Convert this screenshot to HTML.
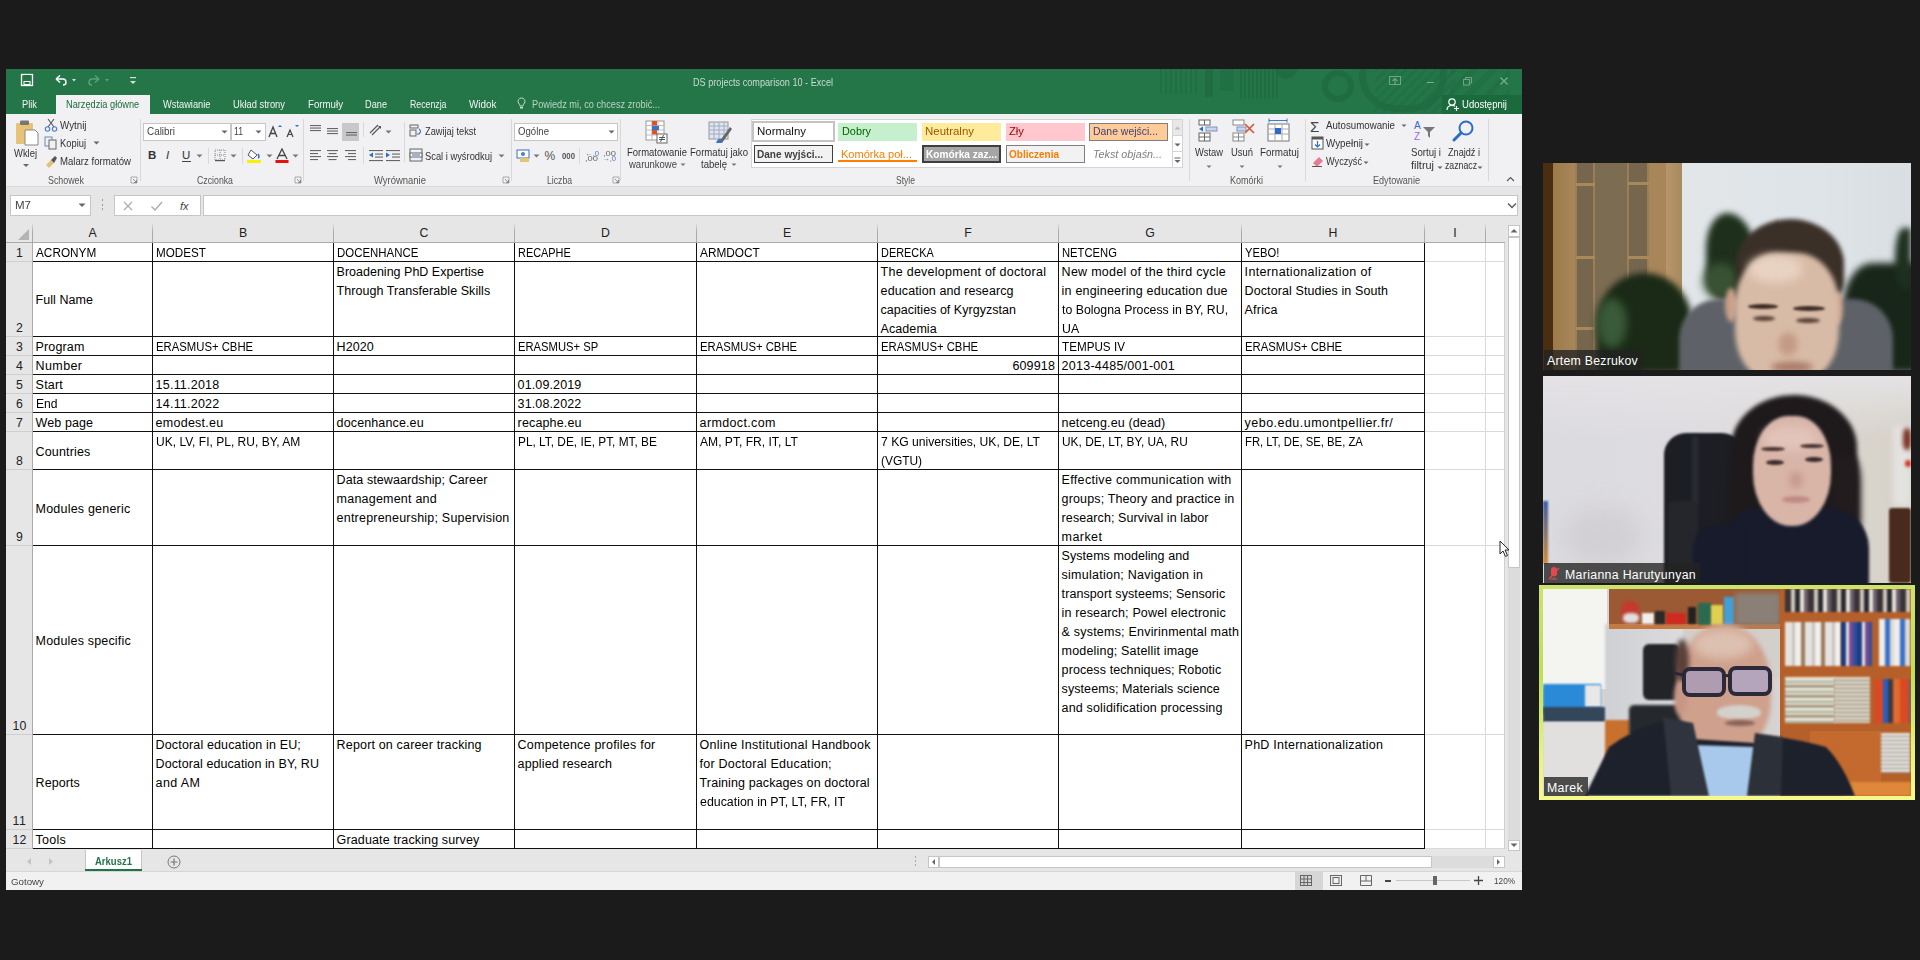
<!DOCTYPE html><html><head><meta charset="utf-8"><style>
html,body{margin:0;padding:0}
body{width:1920px;height:960px;background:#1b1b1b;position:relative;overflow:hidden;font-family:"Liberation Sans",sans-serif}
.r{position:absolute}
.t{position:absolute;white-space:nowrap;line-height:1;font-family:"Liberation Sans",sans-serif}
</style></head><body>
<div class="r" style="left:6px;top:69px;width:1516px;height:821px;background:#f1f1f1;"></div>
<div class="r" style="left:6px;top:69px;width:1516px;height:45px;background:#247649;"></div>
<div class="r" style="left:1150px;top:69px;width:372px;height:44px;overflow:hidden"><div class="r" style="left:10px;top:0;width:40px;height:25px;background:repeating-linear-gradient(90deg,#1f6c41 0 2px,transparent 2px 5px);opacity:.8"></div><div class="r" style="left:55px;top:0;width:8px;height:28px;background:#1f6b41;opacity:.8"></div><div class="r" style="left:70px;top:0;width:14px;height:22px;background:#1f6b41;opacity:.6"></div><div class="r" style="left:90px;top:0;width:38px;height:30px;background:repeating-linear-gradient(90deg,#1e6a40 0 2px,transparent 2px 4px);opacity:.8"></div><div class="r" style="left:125px;top:-10px;width:22px;height:20px;border-radius:50%;background:#1f6a40;opacity:.8"></div><div class="r" style="left:172px;top:1px;width:32px;height:32px;border-radius:50%;border:6px solid #1f6a41;box-sizing:border-box;opacity:.8"></div><div class="r" style="left:209px;top:-30px;width:88px;height:73px;border-radius:38px;border:7px solid #1f6a41;box-sizing:border-box;opacity:.7"></div><div class="r" style="left:225px;top:0;width:80px;height:44px;background:repeating-linear-gradient(135deg,#1f6a41 0 3px,transparent 3px 7px);opacity:.5"></div><div class="r" style="left:300px;top:0;width:60px;height:44px;background:repeating-linear-gradient(135deg,#1f6a41 0 6px,transparent 6px 14px);opacity:.5"></div></div>
<div class="r" style="left:1442px;top:95px;width:80px;height:19px;background:#1b6a3d;"></div>
<svg class="r" style="left:20px;top:73px;" width="14" height="14" viewBox="0 0 14 14"><rect x="1.5" y="1.5" width="11" height="11" fill="none" stroke="#fff" stroke-width="1.3"/><rect x="4" y="2" width="6" height="4" fill="#217346"/><rect x="4" y="8.5" width="6" height="3" fill="none" stroke="#fff" stroke-width="1"/></svg>
<svg class="r" style="left:53px;top:73px;" width="26" height="14" viewBox="0 0 26 14"><path d="M3 6 L7 2.5 M3 6 L7 9.5 M3 6 H10 Q13 6 13 9.5 Q13 12 10 12" fill="none" stroke="#fff" stroke-width="1.4"/><path d="M19 6 L23 6 L21 8.5Z" fill="#cfe3d5"/></svg>
<svg class="r" style="left:86px;top:73px;" width="26" height="14" viewBox="0 0 26 14"><path d="M13 6 L9 2.5 M13 6 L9 9.5 M13 6 H6 Q3 6 3 9.5 Q3 12 6 12" fill="none" stroke="#5f9f78" stroke-width="1.4"/><path d="M19 6 L23 6 L21 8.5Z" fill="#5f9f78"/></svg>
<svg class="r" style="left:128px;top:73px;" width="10" height="14" viewBox="0 0 10 14"><rect x="2" y="4" width="6" height="1.2" fill="#cfe3d5"/><path d="M2 8 L8 8 L5 11Z" fill="#cfe3d5"/></svg>
<div class="t" style="left:693.00px;top:76.61px;font-size:10.5px;color:#c8dccf;transform:scaleX(0.8692);transform-origin:0 0">DS projects comparison 10 - Excel</div>
<svg class="r" style="left:1388px;top:75px;" width="14" height="11" viewBox="0 0 14 11"><rect x="1.5" y="1.5" width="11" height="8" fill="none" stroke="#6fa584" stroke-width="1"/><path d="M7 9 V4 M4.5 6 L7 3.5 L9.5 6" fill="none" stroke="#6fa584" stroke-width="1.2"/></svg>
<div class="r" style="left:1427px;top:82px;width:7px;height:1px;background:#7ab08e;"></div>
<svg class="r" style="left:1462px;top:76px;" width="11" height="10" viewBox="0 0 11 10"><rect x="1.5" y="3.5" width="6" height="5.5" fill="none" stroke="#6fa584"/><path d="M3.5 3.5 V1.5 H9.5 V7 H7.5" fill="none" stroke="#6fa584"/></svg>
<svg class="r" style="left:1499px;top:76px;" width="10" height="10" viewBox="0 0 10 10"><path d="M1.5 1.5 L8.5 8.5 M8.5 1.5 L1.5 8.5" stroke="#7ab08e" stroke-width="1.3"/></svg>
<div class="r" style="left:56px;top:95px;width:94px;height:19px;background:#f1f0f2;"></div>
<div class="t" style="left:21.70px;top:99.16px;font-size:10.8px;color:#f0f5f1;transform:scaleX(0.8619);transform-origin:0 0">Plik</div>
<div class="t" style="left:66.40px;top:99.16px;font-size:10.8px;color:#1d6b3e;transform:scaleX(0.8527);transform-origin:0 0">Narzędzia główne</div>
<div class="t" style="left:162.50px;top:99.16px;font-size:10.8px;color:#f0f5f1;transform:scaleX(0.8602);transform-origin:0 0">Wstawianie</div>
<div class="t" style="left:232.60px;top:99.16px;font-size:10.8px;color:#f0f5f1;transform:scaleX(0.8663);transform-origin:0 0">Układ strony</div>
<div class="t" style="left:307.50px;top:99.16px;font-size:10.8px;color:#f0f5f1;transform:scaleX(0.8973);transform-origin:0 0">Formuły</div>
<div class="t" style="left:365.00px;top:99.16px;font-size:10.8px;color:#f0f5f1;transform:scaleX(0.8521);transform-origin:0 0">Dane</div>
<div class="t" style="left:409.50px;top:99.16px;font-size:10.8px;color:#f0f5f1;transform:scaleX(0.8106);transform-origin:0 0">Recenzja</div>
<div class="t" style="left:468.50px;top:99.16px;font-size:10.8px;color:#f0f5f1;transform:scaleX(0.9165);transform-origin:0 0">Widok</div>
<svg class="r" style="left:517px;top:97px;" width="9" height="13" viewBox="0 0 9 13"><path d="M4.5 1 A3.3 3.3 0 0 1 7.5 6 Q6 7.5 6 9 H3 Q3 7.5 1.5 6 A3.3 3.3 0 0 1 4.5 1Z" fill="none" stroke="#c5dccc" stroke-width="1"/><rect x="3" y="10" width="3" height="1.5" fill="#c5dccc"/></svg>
<div class="t" style="left:532.00px;top:99.16px;font-size:10.8px;color:#b8d3c1;transform:scaleX(0.8530);transform-origin:0 0">Powiedz mi, co chcesz zrobić...</div>
<svg class="r" style="left:1446px;top:97px;" width="14" height="14" viewBox="0 0 14 14"><circle cx="6" cy="5" r="3.2" fill="none" stroke="#fff" stroke-width="1.2"/><path d="M1 13 Q1 8.5 6 8.5 Q8 8.5 9 9.3" fill="none" stroke="#fff" stroke-width="1.2"/><path d="M10.5 9 V14 M8 11.5 H13" stroke="#fff" stroke-width="1.2"/></svg>
<div class="t" style="left:1462.00px;top:99.16px;font-size:10.8px;color:#ffffff;transform:scaleX(0.8818);transform-origin:0 0">Udostępnij</div>
<div class="r" style="left:6px;top:114px;width:1516px;height:73px;background:#f1f0f2;"></div>
<div class="r" style="left:6px;top:186px;width:1516px;height:1px;background:#dadada;"></div>
<div class="r" style="left:140px;top:119px;width:1px;height:62px;background:#d8d8d8;"></div>
<div class="r" style="left:303px;top:119px;width:1px;height:62px;background:#d8d8d8;"></div>
<div class="r" style="left:511px;top:119px;width:1px;height:62px;background:#d8d8d8;"></div>
<div class="r" style="left:620px;top:119px;width:1px;height:62px;background:#d8d8d8;"></div>
<div class="r" style="left:1189px;top:119px;width:1px;height:62px;background:#d8d8d8;"></div>
<div class="r" style="left:1305px;top:119px;width:1px;height:62px;background:#d8d8d8;"></div>
<div class="r" style="left:1488px;top:119px;width:1px;height:62px;background:#d8d8d8;"></div>
<div class="t" style="left:48.00px;top:175.78px;font-size:10.3px;color:#555;transform:scaleX(0.8614);transform-origin:0 0">Schowek</div>
<div class="t" style="left:197.00px;top:175.78px;font-size:10.3px;color:#555;transform:scaleX(0.8498);transform-origin:0 0">Czcionka</div>
<div class="t" style="left:374.00px;top:175.78px;font-size:10.3px;color:#555;transform:scaleX(0.9190);transform-origin:0 0">Wyrównanie</div>
<div class="t" style="left:547.00px;top:175.78px;font-size:10.3px;color:#555;transform:scaleX(0.8397);transform-origin:0 0">Liczba</div>
<div class="t" style="left:895.50px;top:175.78px;font-size:10.3px;color:#555;transform:scaleX(0.8297);transform-origin:0 0">Style</div>
<div class="t" style="left:1230.00px;top:175.78px;font-size:10.3px;color:#555;transform:scaleX(0.8736);transform-origin:0 0">Komórki</div>
<div class="t" style="left:1373.00px;top:175.78px;font-size:10.3px;color:#555;transform:scaleX(0.8826);transform-origin:0 0">Edytowanie</div>
<svg class="r" style="left:130px;top:176px;" width="8" height="8" viewBox="0 0 8 8"><path d="M1 1 H7 V7 H1Z" fill="none" stroke="#999" stroke-width=".8"/><path d="M3 3 L6.5 6.5 M6.5 4 V6.5 H4" fill="none" stroke="#777" stroke-width=".8"/></svg>
<svg class="r" style="left:294px;top:176px;" width="8" height="8" viewBox="0 0 8 8"><path d="M1 1 H7 V7 H1Z" fill="none" stroke="#999" stroke-width=".8"/><path d="M3 3 L6.5 6.5 M6.5 4 V6.5 H4" fill="none" stroke="#777" stroke-width=".8"/></svg>
<svg class="r" style="left:502px;top:176px;" width="8" height="8" viewBox="0 0 8 8"><path d="M1 1 H7 V7 H1Z" fill="none" stroke="#999" stroke-width=".8"/><path d="M3 3 L6.5 6.5 M6.5 4 V6.5 H4" fill="none" stroke="#777" stroke-width=".8"/></svg>
<svg class="r" style="left:612px;top:176px;" width="8" height="8" viewBox="0 0 8 8"><path d="M1 1 H7 V7 H1Z" fill="none" stroke="#999" stroke-width=".8"/><path d="M3 3 L6.5 6.5 M6.5 4 V6.5 H4" fill="none" stroke="#777" stroke-width=".8"/></svg>
<svg class="r" style="left:14px;top:119px;" width="26" height="30" viewBox="0 0 26 30"><rect x="2" y="4" width="17" height="21" rx="1" fill="#e8c377"/><rect x="6" y="1.5" width="9" height="4.5" rx="1" fill="#777"/><path d="M11 11 H21 L24 14 V26 H11Z" fill="#fff" stroke="#888" stroke-width="1"/></svg>
<div class="t" style="left:14.00px;top:147.86px;font-size:10.8px;color:#333;transform:scaleX(0.8712);transform-origin:0 0">Wklej</div>
<svg class="r" style="left:22px;top:163px;" width="8" height="5" viewBox="0 0 8 5"><path d="M1 1 H7 L4 4Z" fill="#666"/></svg>
<svg class="r" style="left:44px;top:118px;" width="14" height="14" viewBox="0 0 14 14"><path d="M4 1 L10 9 M10 1 L4 9" stroke="#555" stroke-width="1.1"/><circle cx="3.5" cy="11" r="2.2" fill="none" stroke="#4a7cc7" stroke-width="1.1"/><circle cx="10.5" cy="11" r="2.2" fill="none" stroke="#4a7cc7" stroke-width="1.1"/></svg>
<div class="t" style="left:60.00px;top:119.86px;font-size:10.8px;color:#333;transform:scaleX(0.9043);transform-origin:0 0">Wytnij</div>
<svg class="r" style="left:44px;top:136px;" width="14" height="14" viewBox="0 0 14 14"><rect x="1" y="1" width="7" height="9" fill="none" stroke="#6a8ab8" stroke-width="1"/><rect x="5" y="4" width="7" height="9" fill="#f1f1f1" stroke="#666" stroke-width="1"/></svg>
<div class="t" style="left:60.00px;top:137.86px;font-size:10.8px;color:#333;transform:scaleX(0.8660);transform-origin:0 0">Kopiuj</div>
<svg class="r" style="left:93px;top:141px;" width="7" height="5" viewBox="0 0 7 5"><path d="M.5 .5 H6.5 L3.5 3.5Z" fill="#666"/></svg>
<svg class="r" style="left:44px;top:155px;" width="14" height="13" viewBox="0 0 14 13"><path d="M2 10 L7 5 L10 8 L5 13Z" fill="#e3c275"/><path d="M7 5 L11 1 L13 3 L10 8Z" fill="#555"/></svg>
<div class="t" style="left:60.00px;top:155.86px;font-size:10.8px;color:#333;transform:scaleX(0.8895);transform-origin:0 0">Malarz formatów</div>
<div class="r" style="left:143px;top:123px;width:88px;height:18px;background:#fff;border:1px solid #c6c6c6;box-sizing:border-box;"></div>
<div class="t" style="left:146.50px;top:126.36px;font-size:10.8px;color:#444;transform:scaleX(0.9148);transform-origin:0 0">Calibri</div>
<svg class="r" style="left:221px;top:130px;" width="7" height="4" viewBox="0 0 7 4"><path d="M.5 .5 H6.5 L3.5 3.5Z" fill="#666"/></svg>
<div class="r" style="left:231px;top:123px;width:35px;height:18px;background:#fff;border:1px solid #c6c6c6;box-sizing:border-box;"></div>
<div class="t" style="left:234.00px;top:126.36px;font-size:10.8px;color:#444;transform:scaleX(0.8027);transform-origin:0 0">11</div>
<svg class="r" style="left:255px;top:130px;" width="7" height="4" viewBox="0 0 7 4"><path d="M.5 .5 H6.5 L3.5 3.5Z" fill="#666"/></svg>
<svg class="r" style="left:268px;top:124px;" width="14" height="14" viewBox="0 0 14 14"><path d="M1 13 L5 3 L9 13 M2.5 9.5 H7.5" fill="none" stroke="#444" stroke-width="1.3"/><path d="M10 3 L12 1 L14 3Z" fill="#2b6bc9"/></svg>
<svg class="r" style="left:285px;top:124px;" width="14" height="14" viewBox="0 0 14 14"><path d="M2 13 L5 6 L8 13 M3 10.5 H7" fill="none" stroke="#444" stroke-width="1.2"/><path d="M10 1 L14 1 L12 3Z" fill="#2b6bc9"/></svg>
<div class="t" style="left:148.00px;top:149.77px;font-size:11.5px;color:#333;font-weight:bold">B</div>
<div class="t" style="left:166.00px;top:149.77px;font-size:11.5px;color:#333;font-style:italic">I</div>
<div class="t" style="left:182.00px;top:149.77px;font-size:11.5px;color:#333">U</div>
<div class="r" style="left:182px;top:161px;width:9px;height:1px;background:#444;"></div>
<svg class="r" style="left:196px;top:154px;" width="7" height="4" viewBox="0 0 7 4"><path d="M.5 .5 H6.5 L3.5 3.5Z" fill="#777"/></svg>
<div class="r" style="left:208px;top:148px;width:1px;height:16px;background:#d8d8d8;"></div>
<svg class="r" style="left:214px;top:149px;" width="12" height="13" viewBox="0 0 12 13"><path d="M1 1 H11 V11 H1Z M6 1 V11 M1 6 H11" fill="none" stroke="#888" stroke-width="1" stroke-dasharray="1 1"/><rect x="1" y="11" width="10" height="1.2" fill="#555"/></svg>
<svg class="r" style="left:230px;top:154px;" width="7" height="4" viewBox="0 0 7 4"><path d="M.5 .5 H6.5 L3.5 3.5Z" fill="#777"/></svg>
<div class="r" style="left:242px;top:148px;width:1px;height:16px;background:#d8d8d8;"></div>
<svg class="r" style="left:246px;top:148px;" width="18" height="16" viewBox="0 0 18 16"><path d="M5 2 L11 7 L7 11 L2 7Z" fill="#fff" stroke="#555" stroke-width="1"/><path d="M12 6 Q14 9 12 10" fill="none" stroke="#2b6bc9" stroke-width="1.5"/><rect x="1" y="12" width="14" height="3" fill="#f7f200"/></svg>
<svg class="r" style="left:266px;top:154px;" width="7" height="4" viewBox="0 0 7 4"><path d="M.5 .5 H6.5 L3.5 3.5Z" fill="#777"/></svg>
<svg class="r" style="left:274px;top:148px;" width="16" height="16" viewBox="0 0 16 16"><path d="M3 11 L8 1 L13 11 M5 7.5 H11" fill="none" stroke="#444" stroke-width="1.3"/><rect x="1.5" y="12" width="13" height="3" fill="#e81010"/></svg>
<svg class="r" style="left:292px;top:154px;" width="7" height="4" viewBox="0 0 7 4"><path d="M.5 .5 H6.5 L3.5 3.5Z" fill="#777"/></svg>
<svg class="r" style="left:309px;top:124px;" width="14" height="14" viewBox="0 0 14 14"><rect x="1" y="1.0" width="11" height="1.1" fill="#666"/><rect x="1" y="3.5" width="11" height="1.1" fill="#666"/><rect x="1" y="6.0" width="11" height="1.1" fill="#666"/></svg>
<svg class="r" style="left:326px;top:127px;" width="14" height="14" viewBox="0 0 14 14"><rect x="1" y="1.0" width="11" height="1.1" fill="#666"/><rect x="1" y="3.5" width="11" height="1.1" fill="#666"/><rect x="1" y="6.0" width="11" height="1.1" fill="#666"/></svg>
<div class="r" style="left:342px;top:123px;width:17px;height:18px;background:#c8c8c8;"></div>
<svg class="r" style="left:345px;top:131px;" width="14" height="14" viewBox="0 0 14 14"><rect x="1" y="1.0" width="11" height="1.1" fill="#666"/><rect x="1" y="3.5" width="11" height="1.1" fill="#666"/></svg>
<svg class="r" style="left:309px;top:149px;" width="14" height="14" viewBox="0 0 14 14"><rect x="1" y="1.0" width="11" height="1.1" fill="#666"/><rect x="1" y="4.0" width="8" height="1.1" fill="#666"/><rect x="1" y="7.0" width="11" height="1.1" fill="#666"/><rect x="1" y="10.0" width="8" height="1.1" fill="#666"/></svg>
<svg class="r" style="left:326px;top:149px;" width="14" height="14" viewBox="0 0 14 14"><rect x="1" y="1.0" width="11" height="1.1" fill="#666"/><rect x="2.5" y="4.0" width="8" height="1.1" fill="#666"/><rect x="1" y="7.0" width="11" height="1.1" fill="#666"/><rect x="2.5" y="10.0" width="8" height="1.1" fill="#666"/></svg>
<svg class="r" style="left:344px;top:149px;" width="14" height="14" viewBox="0 0 14 14"><rect x="1" y="1.0" width="11" height="1.1" fill="#666"/><rect x="4" y="4.0" width="8" height="1.1" fill="#666"/><rect x="1" y="7.0" width="11" height="1.1" fill="#666"/><rect x="4" y="10.0" width="8" height="1.1" fill="#666"/></svg>
<div class="r" style="left:363px;top:122px;width:1px;height:15px;background:#d8d8d8;"></div>
<div class="r" style="left:363px;top:147px;width:1px;height:17px;background:#d8d8d8;"></div>
<svg class="r" style="left:368px;top:124px;" width="16" height="13" viewBox="0 0 16 13"><path d="M2 9 L10 1 M4 11 L12 3" stroke="#555" stroke-width="1.1"/><path d="M13 2 L10 2 L13 5Z" fill="#555"/></svg>
<svg class="r" style="left:385px;top:130px;" width="7" height="4" viewBox="0 0 7 4"><path d="M.5 .5 H6.5 L3.5 3.5Z" fill="#777"/></svg>
<svg class="r" style="left:368px;top:149px;" width="16" height="13" viewBox="0 0 16 13"><rect x="1" y="1" width="14" height="1.1" fill="#666"/><rect x="7" y="4.5" width="8" height="1.1" fill="#666"/><rect x="7" y="7.5" width="8" height="1.1" fill="#666"/><rect x="1" y="11" width="14" height="1.1" fill="#666"/><path d="M1 6 L5 3.5 V8.5Z" fill="#2b6bc9"/></svg>
<svg class="r" style="left:385px;top:149px;" width="16" height="13" viewBox="0 0 16 13"><rect x="1" y="1" width="14" height="1.1" fill="#666"/><rect x="7" y="4.5" width="8" height="1.1" fill="#666"/><rect x="7" y="7.5" width="8" height="1.1" fill="#666"/><rect x="1" y="11" width="14" height="1.1" fill="#666"/><path d="M5 6 L1 3.5 V8.5Z" fill="#2b6bc9"/></svg>
<div class="r" style="left:404px;top:122px;width:1px;height:40px;background:#d8d8d8;"></div>
<svg class="r" style="left:409px;top:124px;" width="14" height="14" viewBox="0 0 14 14"><rect x="1" y="1" width="8" height="3" fill="none" stroke="#666"/><rect x="1" y="6" width="6" height="6" fill="none" stroke="#666"/><path d="M10 5 Q13 7 10 10 L8 10" fill="none" stroke="#2b6bc9" stroke-width="1.1"/></svg>
<div class="t" style="left:425.00px;top:125.86px;font-size:10.8px;color:#333;transform:scaleX(0.8583);transform-origin:0 0">Zawijaj tekst</div>
<svg class="r" style="left:409px;top:148px;" width="14" height="14" viewBox="0 0 14 14"><rect x="1" y="1" width="12" height="12" fill="none" stroke="#666"/><rect x="1" y="5" width="12" height="4" fill="#fff" stroke="#666"/><path d="M3 7 H11" stroke="#2b6bc9"/></svg>
<div class="t" style="left:425.00px;top:150.86px;font-size:10.8px;color:#333;transform:scaleX(0.8653);transform-origin:0 0">Scal i wyśrodkuj</div>
<svg class="r" style="left:498px;top:154px;" width="7" height="4" viewBox="0 0 7 4"><path d="M.5 .5 H6.5 L3.5 3.5Z" fill="#777"/></svg>
<div class="r" style="left:514px;top:123px;width:104px;height:18px;background:#fff;border:1px solid #c6c6c6;box-sizing:border-box;"></div>
<div class="t" style="left:517.50px;top:126.36px;font-size:10.8px;color:#444;transform:scaleX(0.8901);transform-origin:0 0">Ogólne</div>
<svg class="r" style="left:608px;top:130px;" width="7" height="4" viewBox="0 0 7 4"><path d="M.5 .5 H6.5 L3.5 3.5Z" fill="#666"/></svg>
<svg class="r" style="left:516px;top:149px;" width="16" height="14" viewBox="0 0 16 14"><rect x="1" y="1" width="12" height="8" fill="#fff" stroke="#4a7cc7" stroke-width="1.1"/><circle cx="7" cy="5" r="2" fill="#4a7cc7"/><rect x="4" y="9" width="9" height="4" fill="#e8c377"/></svg>
<svg class="r" style="left:533px;top:154px;" width="7" height="4" viewBox="0 0 7 4"><path d="M.5 .5 H6.5 L3.5 3.5Z" fill="#777"/></svg>
<div class="t" style="left:544.50px;top:150.34px;font-size:12px;color:#555">%</div>
<div class="t" style="left:561.50px;top:151.80px;font-size:8.5px;color:#555;font-weight:bold;transform:scaleX(0.9166);transform-origin:0 0">000</div>
<div class="r" style="left:579px;top:148px;width:1px;height:16px;background:#d8d8d8;"></div>
<div class="t" style="left:585.00px;top:150.23px;font-size:8px;color:#4a7cc7;transform:scaleX(0.9542);transform-origin:0 0">←,0</div>
<div class="t" style="left:585.00px;top:155.23px;font-size:8px;color:#666;transform:scaleX(1.1689);transform-origin:0 0">,00</div>
<div class="t" style="left:603.00px;top:150.23px;font-size:8px;color:#666;transform:scaleX(1.1689);transform-origin:0 0">,00</div>
<div class="t" style="left:602.00px;top:155.23px;font-size:8px;color:#4a7cc7;transform:scaleX(0.9542);transform-origin:0 0">→,0</div>
<svg class="r" style="left:645px;top:120px;" width="24" height="24" viewBox="0 0 24 24"><rect x="1" y="1" width="18" height="19" fill="#fff" stroke="#999"/><path d="M1 5.5 H19 M1 10 H19 M1 15 H19 M7 1 V20 M13 1 V20" stroke="#bbb"/><rect x="7" y="1" width="5" height="4.5" fill="#d9542b"/><rect x="7" y="6" width="7" height="4" fill="#3b73c4"/><rect x="7" y="10" width="5" height="4.5" fill="#d9542b"/><rect x="12" y="14" width="10" height="9" fill="#fff" stroke="#666"/><path d="M14 17.5 H20 M14 19.5 H20 M18.5 15 L15.5 22" stroke="#444" stroke-width=".9"/></svg>
<div class="t" style="left:626.50px;top:147.36px;font-size:10.8px;color:#333;transform:scaleX(0.8768);transform-origin:0 0">Formatowanie</div>
<div class="t" style="left:629.00px;top:159.36px;font-size:10.8px;color:#444;transform:scaleX(0.8786);transform-origin:0 0">warunkowe</div>
<svg class="r" style="left:680px;top:163px;" width="6" height="4" viewBox="0 0 6 4"><path d="M.5 .5 H5.5 L3 3Z" fill="#777"/></svg>
<svg class="r" style="left:708px;top:121px;" width="26" height="24" viewBox="0 0 26 24"><rect x="1" y="1" width="19" height="17" fill="#dbe5f3" stroke="#999"/><path d="M1 5 H20 M1 9 H20 M1 13 H20 M6 1 V18 M11 1 V18 M16 1 V18" stroke="#aab"/><path d="M11 21 L22 6 L24 8 L14 22Z" fill="#666"/><path d="M8 22 Q10 17 13 18 L14 22Z" fill="#3b73c4"/></svg>
<div class="t" style="left:690.00px;top:147.36px;font-size:10.8px;color:#333;transform:scaleX(0.8865);transform-origin:0 0">Formatuj jako</div>
<div class="t" style="left:701.00px;top:159.36px;font-size:10.8px;color:#333;transform:scaleX(0.8836);transform-origin:0 0">tabelę</div>
<svg class="r" style="left:731px;top:163px;" width="6" height="4" viewBox="0 0 6 4"><path d="M.5 .5 H5.5 L3 3Z" fill="#777"/></svg>
<div class="r" style="left:751px;top:119px;width:432px;height:49px;background:#fff;border:1px solid #d4d4d4;box-sizing:border-box;"></div>
<div class="r" style="left:752px;top:121px;width:83px;height:21px;background:#fff;border:2px solid #c3c3c3;box-sizing:border-box;"></div>
<div class="t" style="left:757.00px;top:126.36px;font-size:10.8px;color:#111;transform:scaleX(1.0603);transform-origin:0 0">Normalny</div>
<div class="r" style="left:838px;top:123px;width:79px;height:18px;background:#c6efce;"></div>
<div class="t" style="left:841.50px;top:126.36px;font-size:10.8px;color:#006100;transform:scaleX(1.0066);transform-origin:0 0">Dobry</div>
<div class="r" style="left:922px;top:123px;width:79px;height:18px;background:#ffeb9c;"></div>
<div class="t" style="left:925.00px;top:126.36px;font-size:10.8px;color:#9c5700;transform:scaleX(1.0601);transform-origin:0 0">Neutralny</div>
<div class="r" style="left:1006px;top:123px;width:79px;height:18px;background:#ffc7ce;"></div>
<div class="t" style="left:1008.50px;top:126.36px;font-size:10.8px;color:#9c0006;transform:scaleX(1.0419);transform-origin:0 0">Zły</div>
<div class="r" style="left:1089px;top:123px;width:79px;height:18px;background:#ffcc99;border:1px solid #7f7f7f;box-sizing:border-box;"></div>
<div class="t" style="left:1093.00px;top:126.36px;font-size:10.8px;color:#3f3f76;transform:scaleX(0.9669);transform-origin:0 0">Dane wejści...</div>
<div class="r" style="left:754px;top:145px;width:79px;height:18px;background:#f2f2f2;border:1px solid #3f3f3f;box-sizing:border-box;"></div>
<div class="t" style="left:757.00px;top:148.86px;font-size:10.8px;color:#3f3f3f;font-weight:bold;transform:scaleX(0.9318);transform-origin:0 0">Dane wyjści...</div>
<div class="r" style="left:838px;top:160px;width:79px;height:2px;background:#ff8001;"></div>
<div class="t" style="left:841.00px;top:148.86px;font-size:10.8px;color:#fa7d00;transform:scaleX(1.0196);transform-origin:0 0">Komórka poł...</div>
<div class="r" style="left:922px;top:145px;width:79px;height:18px;background:#a5a5a5;border:2px solid #3f3f3f;box-sizing:border-box;"></div>
<div class="t" style="left:926.00px;top:148.86px;font-size:10.8px;color:#fff;font-weight:bold;transform:scaleX(0.9389);transform-origin:0 0">Komórka zaz...</div>
<div class="r" style="left:1006px;top:145px;width:79px;height:18px;background:#f2f2f2;border:1px solid #7f7f7f;box-sizing:border-box;"></div>
<div class="t" style="left:1009.00px;top:149.36px;font-size:10.8px;color:#fa7d00;font-weight:bold;transform:scaleX(0.9257);transform-origin:0 0">Obliczenia</div>
<div class="t" style="left:1092.50px;top:149.36px;font-size:10.8px;color:#7f7f7f;font-style:italic;transform:scaleX(0.9965);transform-origin:0 0">Tekst objaśn...</div>
<div class="r" style="left:1172px;top:119px;width:11px;height:49px;background:#fff;border:1px solid #d4d4d4;box-sizing:border-box;"></div>
<div class="r" style="left:1173px;top:120px;width:9px;height:15px;background:#e8e8e8;"></div>
<svg class="r" style="left:1174px;top:126px;" width="7" height="4" viewBox="0 0 7 4"><path d="M.5 3.5 H6.5 L3.5 .5Z" fill="#bbb"/></svg>
<div class="r" style="left:1173px;top:135px;width:9px;height:1px;background:#d4d4d4;"></div>
<svg class="r" style="left:1174px;top:143px;" width="7" height="4" viewBox="0 0 7 4"><path d="M.5 .5 H6.5 L3.5 3.5Z" fill="#666"/></svg>
<div class="r" style="left:1173px;top:151px;width:9px;height:1px;background:#d4d4d4;"></div>
<svg class="r" style="left:1174px;top:157px;" width="7" height="7" viewBox="0 0 7 7"><rect x=".5" y=".5" width="6" height="1" fill="#666"/><path d="M.5 3 H6.5 L3.5 6Z" fill="#666"/></svg>
<svg class="r" style="left:1197px;top:119px;" width="26" height="24" viewBox="0 0 26 24"><rect x="2" y="1" width="11" height="5" fill="#fff" stroke="#666"/><path d="M7.5 1 V6" stroke="#666"/><path d="M2 10 L6 7.5 V12.5Z" fill="#2b6bc9"/><rect x="9" y="8" width="11" height="4" fill="#c9d6ea" stroke="#7a95c2"/><rect x="2" y="14" width="11" height="8" fill="#fff" stroke="#666"/><path d="M2 18 H13 M7.5 14 V22" stroke="#666"/></svg>
<div class="t" style="left:1195.00px;top:147.36px;font-size:10.8px;color:#333;transform:scaleX(0.8642);transform-origin:0 0">Wstaw</div>
<svg class="r" style="left:1206px;top:165px;" width="6" height="4" viewBox="0 0 6 4"><path d="M.5 .5 H5.5 L3 3Z" fill="#777"/></svg>
<svg class="r" style="left:1231px;top:119px;" width="26" height="24" viewBox="0 0 26 24"><rect x="2" y="1" width="11" height="5" fill="#fff" stroke="#888"/><rect x="6" y="8" width="9" height="4" fill="#c9d6ea" stroke="#7a95c2"/><rect x="2" y="14" width="11" height="8" fill="#fff" stroke="#888"/><path d="M2 18 H13 M7.5 14 V22" stroke="#888"/><path d="M14 5 L23 14 M23 5 L14 14" stroke="#d9542b" stroke-width="1.6"/></svg>
<div class="t" style="left:1231.00px;top:147.36px;font-size:10.8px;color:#333;transform:scaleX(0.8726);transform-origin:0 0">Usuń</div>
<svg class="r" style="left:1239px;top:165px;" width="6" height="4" viewBox="0 0 6 4"><path d="M.5 .5 H5.5 L3 3Z" fill="#777"/></svg>
<svg class="r" style="left:1267px;top:118px;" width="24" height="26" viewBox="0 0 24 26"><path d="M2 2.5 H20 M2 .5 V4.5 M20 .5 V4.5" stroke="#2b6bc9" stroke-width=".9"/><rect x="1" y="6" width="21" height="17" fill="#fff" stroke="#777"/><path d="M1 11 H22 M1 16 H22 M8 6 V23 M15 6 V23" stroke="#aaa"/><rect x="8" y="10" width="6" height="6" fill="#2b6bc9"/></svg>
<div class="t" style="left:1260.00px;top:147.36px;font-size:10.8px;color:#333;transform:scaleX(0.9153);transform-origin:0 0">Formatuj</div>
<svg class="r" style="left:1277px;top:165px;" width="6" height="4" viewBox="0 0 6 4"><path d="M.5 .5 H5.5 L3 3Z" fill="#777"/></svg>
<div class="t" style="left:1310.00px;top:118.80px;font-size:15px;color:#444">Σ</div>
<div class="t" style="left:1325.50px;top:120.36px;font-size:10.8px;color:#333;transform:scaleX(0.8979);transform-origin:0 0">Autosumowanie</div>
<svg class="r" style="left:1401px;top:124px;" width="6" height="4" viewBox="0 0 6 4"><path d="M.5 .5 H5.5 L3 3Z" fill="#666"/></svg>
<svg class="r" style="left:1311px;top:136px;" width="13" height="14" viewBox="0 0 13 14"><rect x="1" y="1" width="11" height="12" fill="#fff" stroke="#555"/><rect x="1" y="1" width="11" height="2.5" fill="#555"/><path d="M6.5 5 V11 M4 8.5 L6.5 11 L9 8.5" fill="none" stroke="#2b6bc9" stroke-width="1.2"/></svg>
<div class="t" style="left:1325.50px;top:138.36px;font-size:10.8px;color:#333;transform:scaleX(0.9087);transform-origin:0 0">Wypełnij</div>
<svg class="r" style="left:1364px;top:143px;" width="6" height="4" viewBox="0 0 6 4"><path d="M.5 .5 H5.5 L3 3Z" fill="#666"/></svg>
<svg class="r" style="left:1311px;top:155px;" width="13" height="12" viewBox="0 0 13 12"><path d="M2 8 L8 2 L12 6 L6 12Z" fill="#e87a96"/><rect x="1" y="11" width="10" height="1" fill="#555"/></svg>
<div class="t" style="left:1325.50px;top:156.36px;font-size:10.8px;color:#333;transform:scaleX(0.8471);transform-origin:0 0">Wyczyść</div>
<svg class="r" style="left:1363px;top:161px;" width="6" height="4" viewBox="0 0 6 4"><path d="M.5 .5 H5.5 L3 3Z" fill="#666"/></svg>
<svg class="r" style="left:1413px;top:119px;" width="26" height="24" viewBox="0 0 26 24"><text x="1" y="10" font-size="10" font-family="Liberation Sans" fill="#2b6bc9">A</text><text x="1" y="21" font-size="10" font-family="Liberation Sans" fill="#a56bd1">Z</text><path d="M10 8 H22 L17 13 V19 L15 17 V13Z" fill="#777"/></svg>
<div class="t" style="left:1411.00px;top:147.36px;font-size:10.8px;color:#333;transform:scaleX(0.8925);transform-origin:0 0">Sortuj i</div>
<div class="t" style="left:1410.50px;top:159.86px;font-size:10.8px;color:#333;transform:scaleX(1.0086);transform-origin:0 0">filtruj</div>
<svg class="r" style="left:1437px;top:166px;" width="6" height="4" viewBox="0 0 6 4"><path d="M.5 .5 H5.5 L3 3Z" fill="#666"/></svg>
<svg class="r" style="left:1451px;top:119px;" width="26" height="24" viewBox="0 0 26 24"><circle cx="15" cy="9" r="6.5" fill="none" stroke="#2b6bc9" stroke-width="2"/><path d="M10 14 L3 21" stroke="#2b6bc9" stroke-width="3" stroke-linecap="round"/></svg>
<div class="t" style="left:1447.50px;top:147.36px;font-size:10.8px;color:#333;transform:scaleX(0.8462);transform-origin:0 0">Znajdź i</div>
<div class="t" style="left:1445.00px;top:159.86px;font-size:10.8px;color:#333;transform:scaleX(0.8077);transform-origin:0 0">zaznacz</div>
<svg class="r" style="left:1477px;top:166px;" width="6" height="4" viewBox="0 0 6 4"><path d="M.5 .5 H5.5 L3 3Z" fill="#666"/></svg>
<svg class="r" style="left:1506px;top:176px;" width="9" height="6" viewBox="0 0 9 6"><path d="M1 5 L4.5 1.5 L8 5" fill="none" stroke="#555" stroke-width="1.1"/></svg>
<div class="r" style="left:6px;top:187px;width:1516px;height:36px;background:#e6e6e6;"></div>
<div class="r" style="left:10px;top:195px;width:81px;height:21px;background:#fff;border:1px solid #c6c6c6;box-sizing:border-box;"></div>
<div class="t" style="left:15.00px;top:200.36px;font-size:10.8px;color:#444;transform:scaleX(1.0664);transform-origin:0 0">M7</div>
<svg class="r" style="left:78px;top:203px;" width="8" height="5" viewBox="0 0 8 5"><path d="M.5 .5 H7.5 L4 4Z" fill="#666"/></svg>
<div class="r" style="left:102px;top:199px;width:1px;height:2px;background:#999;"></div>
<div class="r" style="left:102px;top:203.5px;width:1px;height:2px;background:#999;"></div>
<div class="r" style="left:102px;top:208px;width:1px;height:2px;background:#999;"></div>
<div class="r" style="left:114px;top:195px;width:87px;height:21px;background:#fff;border:1px solid #c6c6c6;box-sizing:border-box;"></div>
<svg class="r" style="left:122px;top:200px;" width="12" height="12" viewBox="0 0 12 12"><path d="M2 2 L10 10 M10 2 L2 10" stroke="#aaa" stroke-width="1.1"/></svg>
<svg class="r" style="left:150px;top:200px;" width="14" height="12" viewBox="0 0 14 12"><path d="M1.5 6.5 L5 10 L12 2" fill="none" stroke="#aaa" stroke-width="1.3"/></svg>
<div class="t" style="left:180.00px;top:200.69px;font-size:11px;color:#444;font-style:italic;font-family:"Liberation Serif",serif">fx</div>
<div class="r" style="left:203px;top:195px;width:1315px;height:21px;border:1px solid #c6c6c6;box-sizing:border-box;background:#fff"></div>
<svg class="r" style="left:1507px;top:202px;" width="10" height="7" viewBox="0 0 10 7"><path d="M1 1.5 L5 5.5 L9 1.5" fill="none" stroke="#555" stroke-width="1.3"/></svg>
<div class="r" style="left:6px;top:849px;width:1516px;height:23px;background:#e6e6e6;"></div>
<div class="r" style="left:6px;top:872px;width:1516px;height:18px;background:#f1f1f1;"></div>
<div class="r" style="left:6px;top:871px;width:1516px;height:1px;background:#d6d6d6;"></div>
<svg class="r" style="left:26px;top:857px;" width="6" height="9" viewBox="0 0 6 9"><path d="M5 1 L1 4.5 L5 8Z" fill="#c3c3c3"/></svg>
<svg class="r" style="left:48px;top:857px;" width="6" height="9" viewBox="0 0 6 9"><path d="M1 1 L5 4.5 L1 8Z" fill="#c3c3c3"/></svg>
<div class="r" style="left:85px;top:850px;width:57px;height:21px;background:#fff;border:1px solid #c4c4c4;box-sizing:border-box;border-top:none"></div>
<div class="r" style="left:85px;top:869px;width:57px;height:2px;background:#217346;"></div>
<div class="t" style="left:95.00px;top:856.36px;font-size:10.8px;color:#217346;font-weight:bold;transform:scaleX(0.8805);transform-origin:0 0">Arkusz1</div>
<svg class="r" style="left:167px;top:855px;" width="14" height="14" viewBox="0 0 14 14"><circle cx="7" cy="7" r="6" fill="none" stroke="#777" stroke-width="1"/><path d="M7 3.5 V10.5 M3.5 7 H10.5" stroke="#777" stroke-width="1.2"/></svg>
<div class="r" style="left:915px;top:856px;width:1px;height:2px;background:#aaa;"></div>
<div class="r" style="left:915px;top:860px;width:1px;height:2px;background:#aaa;"></div>
<div class="r" style="left:915px;top:864px;width:1px;height:2px;background:#aaa;"></div>
<div class="r" style="left:928px;top:856px;width:11px;height:12px;background:#fff;border:1px solid #c6c6c6;box-sizing:border-box;"></div>
<svg class="r" style="left:930px;top:858px;" width="7" height="8" viewBox="0 0 7 8"><path d="M5 1 L2 4 L5 7Z" fill="#666"/></svg>
<div class="r" style="left:939px;top:856px;width:554px;height:12px;background:#dcdcdc;"></div>
<div class="r" style="left:939px;top:856px;width:493px;height:12px;background:#fff;border:1px solid #c6c6c6;box-sizing:border-box;"></div>
<div class="r" style="left:1493px;top:856px;width:12px;height:12px;background:#fff;border:1px solid #c6c6c6;box-sizing:border-box;"></div>
<svg class="r" style="left:1495px;top:858px;" width="7" height="8" viewBox="0 0 7 8"><path d="M2 1 L5 4 L2 7Z" fill="#666"/></svg>
<div class="t" style="left:11.00px;top:876.70px;font-size:9.8px;color:#444;transform:scaleX(0.9933);transform-origin:0 0">Gotowy</div>
<div class="r" style="left:1295px;top:872px;width:28px;height:18px;background:#d6d6d6;"></div>
<svg class="r" style="left:1300px;top:875px;" width="13" height="12" viewBox="0 0 13 12"><rect x=".5" y=".5" width="11" height="10" fill="none" stroke="#666"/><path d="M.5 4 H11.5 M.5 7.5 H11.5 M4 .5 V10.5 M7.5 .5 V10.5" stroke="#666"/></svg>
<svg class="r" style="left:1330px;top:875px;" width="13" height="12" viewBox="0 0 13 12"><rect x=".5" y=".5" width="11" height="10" fill="none" stroke="#666"/><rect x="3" y="2.5" width="6" height="6" fill="none" stroke="#666"/></svg>
<svg class="r" style="left:1360px;top:875px;" width="13" height="12" viewBox="0 0 13 12"><path d="M.5 .5 H11.5 V10.5 H.5Z M6 .5 V6 M.5 6 H11.5" fill="none" stroke="#666"/></svg>
<div class="r" style="left:1385px;top:880px;width:6px;height:1.5px;background:#444;"></div>
<div class="r" style="left:1396px;top:880px;width:74px;height:1px;background:#c6c6c6;"></div>
<div class="r" style="left:1433px;top:876px;width:4px;height:9px;background:#666;"></div>
<svg class="r" style="left:1474px;top:876px;" width="9" height="9" viewBox="0 0 9 9"><path d="M4.5 0 V9 M0 4.5 H9" stroke="#444" stroke-width="1.3"/></svg>
<div class="t" style="left:1494.00px;top:876.46px;font-size:9.5px;color:#444;transform:scaleX(0.8643);transform-origin:0 0">120%</div>
<div class="r" style="left:6px;top:223px;width:1499px;height:19px;background:#e6e6e6;"></div>
<div class="r" style="left:6px;top:242px;width:26px;height:607px;background:#e6e6e6;"></div>
<div class="r" style="left:33px;top:243px;width:1472px;height:606px;background:#ffffff;"></div>
<svg class="r" style="left:17px;top:228px;" width="13" height="13" viewBox="0 0 13 13"><path d="M12 1 V12 H1Z" fill="#b4b4b4"/></svg>
<div class="r" style="left:6px;top:242px;width:1499px;height:1px;background:#ababab;"></div>
<div class="r" style="left:32px;top:223px;width:1px;height:19px;background:linear-gradient(#e6e6e6,#ababab 45%,#ababab);"></div>
<div class="r" style="left:152px;top:223px;width:1px;height:19px;background:linear-gradient(#e6e6e6,#ababab 45%,#ababab);"></div>
<div class="r" style="left:333px;top:223px;width:1px;height:19px;background:linear-gradient(#e6e6e6,#ababab 45%,#ababab);"></div>
<div class="r" style="left:514px;top:223px;width:1px;height:19px;background:linear-gradient(#e6e6e6,#ababab 45%,#ababab);"></div>
<div class="r" style="left:696px;top:223px;width:1px;height:19px;background:linear-gradient(#e6e6e6,#ababab 45%,#ababab);"></div>
<div class="r" style="left:877px;top:223px;width:1px;height:19px;background:linear-gradient(#e6e6e6,#ababab 45%,#ababab);"></div>
<div class="r" style="left:1058px;top:223px;width:1px;height:19px;background:linear-gradient(#e6e6e6,#ababab 45%,#ababab);"></div>
<div class="r" style="left:1241px;top:223px;width:1px;height:19px;background:linear-gradient(#e6e6e6,#ababab 45%,#ababab);"></div>
<div class="r" style="left:1424px;top:223px;width:1px;height:19px;background:linear-gradient(#e6e6e6,#ababab 45%,#ababab);"></div>
<div class="r" style="left:1485px;top:223px;width:1px;height:19px;background:linear-gradient(#e6e6e6,#ababab 45%,#ababab);"></div>
<div class="r" style="left:32px;top:242px;width:1px;height:607px;background:#ababab;"></div>
<div class="r" style="left:6px;top:261px;width:26px;height:1px;background:#cfcfcf;"></div>
<div class="r" style="left:6px;top:336px;width:26px;height:1px;background:#cfcfcf;"></div>
<div class="r" style="left:6px;top:355px;width:26px;height:1px;background:#cfcfcf;"></div>
<div class="r" style="left:6px;top:374px;width:26px;height:1px;background:#cfcfcf;"></div>
<div class="r" style="left:6px;top:393px;width:26px;height:1px;background:#cfcfcf;"></div>
<div class="r" style="left:6px;top:412px;width:26px;height:1px;background:#cfcfcf;"></div>
<div class="r" style="left:6px;top:431px;width:26px;height:1px;background:#cfcfcf;"></div>
<div class="r" style="left:6px;top:469px;width:26px;height:1px;background:#cfcfcf;"></div>
<div class="r" style="left:6px;top:545px;width:26px;height:1px;background:#cfcfcf;"></div>
<div class="r" style="left:6px;top:734px;width:26px;height:1px;background:#cfcfcf;"></div>
<div class="r" style="left:6px;top:829px;width:26px;height:1px;background:#cfcfcf;"></div>
<div class="r" style="left:6px;top:848px;width:26px;height:1px;background:#cfcfcf;"></div>
<div class="t" style="left:88.40px;top:226.59px;font-size:12.3px;color:#222">A</div>
<div class="t" style="left:238.90px;top:226.59px;font-size:12.3px;color:#222">B</div>
<div class="t" style="left:419.56px;top:226.59px;font-size:12.3px;color:#222">C</div>
<div class="t" style="left:601.06px;top:226.59px;font-size:12.3px;color:#222">D</div>
<div class="t" style="left:782.90px;top:226.59px;font-size:12.3px;color:#222">E</div>
<div class="t" style="left:964.24px;top:226.59px;font-size:12.3px;color:#222">F</div>
<div class="t" style="left:1145.22px;top:226.59px;font-size:12.3px;color:#222">G</div>
<div class="t" style="left:1328.56px;top:226.59px;font-size:12.3px;color:#222">H</div>
<div class="t" style="left:1453.29px;top:226.59px;font-size:12.3px;color:#222">I</div>
<div class="t" style="left:15.95px;top:247.29px;font-size:12.3px;color:#222;letter-spacing:0.255px">1</div>
<div class="t" style="left:15.95px;top:322.29px;font-size:12.3px;color:#222;letter-spacing:0.255px">2</div>
<div class="t" style="left:15.95px;top:341.29px;font-size:12.3px;color:#222;letter-spacing:0.255px">3</div>
<div class="t" style="left:15.95px;top:360.29px;font-size:12.3px;color:#222;letter-spacing:0.255px">4</div>
<div class="t" style="left:15.95px;top:379.29px;font-size:12.3px;color:#222;letter-spacing:0.255px">5</div>
<div class="t" style="left:15.95px;top:398.29px;font-size:12.3px;color:#222;letter-spacing:0.255px">6</div>
<div class="t" style="left:15.95px;top:417.29px;font-size:12.3px;color:#222;letter-spacing:0.255px">7</div>
<div class="t" style="left:15.95px;top:455.29px;font-size:12.3px;color:#222;letter-spacing:0.255px">8</div>
<div class="t" style="left:15.95px;top:531.29px;font-size:12.3px;color:#222;letter-spacing:0.255px">9</div>
<div class="t" style="left:12.40px;top:720.29px;font-size:12.3px;color:#222;letter-spacing:0.255px">10</div>
<div class="t" style="left:12.40px;top:815.29px;font-size:12.3px;color:#222;letter-spacing:0.711px">11</div>
<div class="t" style="left:12.40px;top:834.29px;font-size:12.3px;color:#222;letter-spacing:0.255px">12</div>
<div class="r" style="left:1425px;top:261px;width:80px;height:1px;background:#d9d9d9;"></div>
<div class="r" style="left:1425px;top:336px;width:80px;height:1px;background:#d9d9d9;"></div>
<div class="r" style="left:1425px;top:355px;width:80px;height:1px;background:#d9d9d9;"></div>
<div class="r" style="left:1425px;top:374px;width:80px;height:1px;background:#d9d9d9;"></div>
<div class="r" style="left:1425px;top:393px;width:80px;height:1px;background:#d9d9d9;"></div>
<div class="r" style="left:1425px;top:412px;width:80px;height:1px;background:#d9d9d9;"></div>
<div class="r" style="left:1425px;top:431px;width:80px;height:1px;background:#d9d9d9;"></div>
<div class="r" style="left:1425px;top:469px;width:80px;height:1px;background:#d9d9d9;"></div>
<div class="r" style="left:1425px;top:545px;width:80px;height:1px;background:#d9d9d9;"></div>
<div class="r" style="left:1425px;top:734px;width:80px;height:1px;background:#d9d9d9;"></div>
<div class="r" style="left:1425px;top:829px;width:80px;height:1px;background:#d9d9d9;"></div>
<div class="r" style="left:1425px;top:848px;width:80px;height:1px;background:#d9d9d9;"></div>
<div class="r" style="left:1485px;top:243px;width:1px;height:606px;background:#d9d9d9;"></div>
<div class="r" style="left:1504px;top:243px;width:1px;height:606px;background:#cfcfcf;"></div>
<div class="r" style="left:33px;top:261px;width:1392px;height:1px;background:#111;"></div>
<div class="r" style="left:33px;top:336px;width:1392px;height:1px;background:#111;"></div>
<div class="r" style="left:33px;top:355px;width:1392px;height:1px;background:#111;"></div>
<div class="r" style="left:33px;top:374px;width:1392px;height:1px;background:#111;"></div>
<div class="r" style="left:33px;top:393px;width:1392px;height:1px;background:#111;"></div>
<div class="r" style="left:33px;top:412px;width:1392px;height:1px;background:#111;"></div>
<div class="r" style="left:33px;top:431px;width:1392px;height:1px;background:#111;"></div>
<div class="r" style="left:33px;top:469px;width:1392px;height:1px;background:#111;"></div>
<div class="r" style="left:33px;top:545px;width:1392px;height:1px;background:#111;"></div>
<div class="r" style="left:33px;top:734px;width:1392px;height:1px;background:#111;"></div>
<div class="r" style="left:33px;top:829px;width:1392px;height:1px;background:#111;"></div>
<div class="r" style="left:33px;top:848px;width:1392px;height:1px;background:#111;"></div>
<div class="r" style="left:152px;top:243px;width:1px;height:606px;background:#111;"></div>
<div class="r" style="left:333px;top:243px;width:1px;height:606px;background:#111;"></div>
<div class="r" style="left:514px;top:243px;width:1px;height:606px;background:#111;"></div>
<div class="r" style="left:696px;top:243px;width:1px;height:606px;background:#111;"></div>
<div class="r" style="left:877px;top:243px;width:1px;height:606px;background:#111;"></div>
<div class="r" style="left:1058px;top:243px;width:1px;height:606px;background:#111;"></div>
<div class="r" style="left:1241px;top:243px;width:1px;height:606px;background:#111;"></div>
<div class="r" style="left:1424px;top:243px;width:1px;height:606px;background:#111;"></div>
<div class="t" style="left:35.60px;top:246.92px;font-size:12.5px;color:#000;transform:scaleX(0.9432);transform-origin:0 0">ACRONYM</div>
<div class="t" style="left:155.60px;top:246.92px;font-size:12.5px;color:#000;transform:scaleX(0.9340);transform-origin:0 0">MODEST</div>
<div class="t" style="left:336.60px;top:246.92px;font-size:12.5px;color:#000;transform:scaleX(0.9154);transform-origin:0 0">DOCENHANCE</div>
<div class="t" style="left:517.60px;top:246.92px;font-size:12.5px;color:#000;transform:scaleX(0.8736);transform-origin:0 0">RECAPHE</div>
<div class="t" style="left:699.60px;top:246.92px;font-size:12.5px;color:#000;transform:scaleX(0.9470);transform-origin:0 0">ARMDOCT</div>
<div class="t" style="left:880.60px;top:246.92px;font-size:12.5px;color:#000;transform:scaleX(0.8725);transform-origin:0 0">DERECKA</div>
<div class="t" style="left:1061.60px;top:246.92px;font-size:12.5px;color:#000;transform:scaleX(0.8977);transform-origin:0 0">NETCENG</div>
<div class="t" style="left:1244.60px;top:246.92px;font-size:12.5px;color:#000;transform:scaleX(0.8967);transform-origin:0 0">YEBO!</div>
<div class="t" style="left:35.60px;top:294.12px;font-size:12.5px;color:#000;letter-spacing:0.035px">Full Name</div>
<div class="t" style="left:336.60px;top:265.92px;font-size:12.5px;color:#000;letter-spacing:0.003px">Broadening PhD Expertise</div>
<div class="t" style="left:336.60px;top:284.92px;font-size:12.5px;color:#000;letter-spacing:0.053px">Through Transferable Skills</div>
<div class="t" style="left:880.60px;top:265.92px;font-size:12.5px;color:#000;letter-spacing:0.265px">The development of doctoral</div>
<div class="t" style="left:880.60px;top:284.92px;font-size:12.5px;color:#000;letter-spacing:0.110px">education and researcg</div>
<div class="t" style="left:880.60px;top:303.92px;font-size:12.5px;color:#000;letter-spacing:0.022px">capacities of Kyrgyzstan</div>
<div class="t" style="left:880.60px;top:322.92px;font-size:12.5px;color:#000;letter-spacing:0.070px">Academia</div>
<div class="t" style="left:1061.60px;top:265.92px;font-size:12.5px;color:#000;letter-spacing:0.266px">New model of the third cycle</div>
<div class="t" style="left:1061.60px;top:284.92px;font-size:12.5px;color:#000;letter-spacing:0.199px">in engineering education due</div>
<div class="t" style="left:1061.60px;top:303.92px;font-size:12.5px;color:#000;transform:scaleX(0.9848);transform-origin:0 0">to Bologna Process in BY, RU,</div>
<div class="t" style="left:1061.60px;top:322.92px;font-size:12.5px;color:#000;transform:scaleX(0.9837);transform-origin:0 0">UA</div>
<div class="t" style="left:1244.60px;top:265.92px;font-size:12.5px;color:#000;letter-spacing:0.353px">Internationalization of</div>
<div class="t" style="left:1244.60px;top:284.92px;font-size:12.5px;color:#000;letter-spacing:0.100px">Doctoral Studies in South</div>
<div class="t" style="left:1244.60px;top:303.92px;font-size:12.5px;color:#000;letter-spacing:0.190px">Africa</div>
<div class="t" style="left:35.60px;top:340.92px;font-size:12.5px;color:#000;letter-spacing:0.132px">Program</div>
<div class="t" style="left:155.60px;top:340.92px;font-size:12.5px;color:#000;transform:scaleX(0.9049);transform-origin:0 0">ERASMUS+ CBHE</div>
<div class="t" style="left:336.60px;top:340.92px;font-size:12.5px;color:#000;letter-spacing:0.054px">H2020</div>
<div class="t" style="left:517.60px;top:340.92px;font-size:12.5px;color:#000;transform:scaleX(0.8977);transform-origin:0 0">ERASMUS+ SP</div>
<div class="t" style="left:699.60px;top:340.92px;font-size:12.5px;color:#000;transform:scaleX(0.9049);transform-origin:0 0">ERASMUS+ CBHE</div>
<div class="t" style="left:880.60px;top:340.92px;font-size:12.5px;color:#000;transform:scaleX(0.9049);transform-origin:0 0">ERASMUS+ CBHE</div>
<div class="t" style="left:1061.60px;top:340.92px;font-size:12.5px;color:#000;transform:scaleX(0.9338);transform-origin:0 0">TEMPUS IV</div>
<div class="t" style="left:1244.60px;top:340.92px;font-size:12.5px;color:#000;transform:scaleX(0.9049);transform-origin:0 0">ERASMUS+ CBHE</div>
<div class="t" style="left:35.60px;top:359.92px;font-size:12.5px;color:#000;letter-spacing:0.386px">Number</div>
<div class="t" style="left:1012.43px;top:359.92px;font-size:12.5px;color:#000;letter-spacing:0.144px">609918</div>
<div class="t" style="left:1061.60px;top:359.92px;font-size:12.5px;color:#000;letter-spacing:0.246px">2013-4485/001-001</div>
<div class="t" style="left:35.60px;top:378.92px;font-size:12.5px;color:#000;letter-spacing:0.200px">Start</div>
<div class="t" style="left:155.60px;top:378.92px;font-size:12.5px;color:#000;letter-spacing:0.220px">15.11.2018</div>
<div class="t" style="left:517.60px;top:378.92px;font-size:12.5px;color:#000;letter-spacing:0.127px">01.09.2019</div>
<div class="t" style="left:35.60px;top:397.92px;font-size:12.5px;color:#000;transform:scaleX(0.9687);transform-origin:0 0">End</div>
<div class="t" style="left:155.60px;top:397.92px;font-size:12.5px;color:#000;letter-spacing:0.220px">14.11.2022</div>
<div class="t" style="left:517.60px;top:397.92px;font-size:12.5px;color:#000;letter-spacing:0.127px">31.08.2022</div>
<div class="t" style="left:35.60px;top:416.92px;font-size:12.5px;color:#000;letter-spacing:0.100px">Web page</div>
<div class="t" style="left:155.60px;top:416.92px;font-size:12.5px;color:#000;letter-spacing:0.255px">emodest.eu</div>
<div class="t" style="left:336.60px;top:416.92px;font-size:12.5px;color:#000;letter-spacing:0.126px">docenhance.eu</div>
<div class="t" style="left:517.60px;top:416.92px;font-size:12.5px;color:#000;letter-spacing:0.145px">recaphe.eu</div>
<div class="t" style="left:699.60px;top:416.92px;font-size:12.5px;color:#000;letter-spacing:0.354px">armdoct.com</div>
<div class="t" style="left:1061.60px;top:416.92px;font-size:12.5px;color:#000;letter-spacing:0.135px">netceng.eu (dead)</div>
<div class="t" style="left:1244.60px;top:416.92px;font-size:12.5px;color:#000;letter-spacing:0.470px">yebo.edu.umontpellier.fr/</div>
<div class="t" style="left:35.60px;top:445.62px;font-size:12.5px;color:#000;letter-spacing:0.143px">Countries</div>
<div class="t" style="left:155.60px;top:435.92px;font-size:12.5px;color:#000;transform:scaleX(0.9624);transform-origin:0 0">UK, LV, FI, PL, RU, BY, AM</div>
<div class="t" style="left:517.60px;top:435.92px;font-size:12.5px;color:#000;transform:scaleX(0.9491);transform-origin:0 0">PL, LT, DE, IE, PT, MT, BE</div>
<div class="t" style="left:699.60px;top:435.92px;font-size:12.5px;color:#000;transform:scaleX(0.9672);transform-origin:0 0">AM, PT, FR, IT, LT</div>
<div class="t" style="left:880.60px;top:435.92px;font-size:12.5px;color:#000;transform:scaleX(0.9715);transform-origin:0 0">7 KG universities, UK, DE, LT</div>
<div class="t" style="left:880.60px;top:454.92px;font-size:12.5px;color:#000;transform:scaleX(0.9547);transform-origin:0 0">(VGTU)</div>
<div class="t" style="left:1061.60px;top:435.92px;font-size:12.5px;color:#000;transform:scaleX(0.9515);transform-origin:0 0">UK, DE, LT, BY, UA, RU</div>
<div class="t" style="left:1244.60px;top:435.92px;font-size:12.5px;color:#000;transform:scaleX(0.9041);transform-origin:0 0">FR, LT, DE, SE, BE, ZA</div>
<div class="t" style="left:35.60px;top:502.62px;font-size:12.5px;color:#000;letter-spacing:0.204px">Modules generic</div>
<div class="t" style="left:336.60px;top:473.92px;font-size:12.5px;color:#000;letter-spacing:0.086px">Data stewaardship; Career</div>
<div class="t" style="left:336.60px;top:492.92px;font-size:12.5px;color:#000;letter-spacing:0.214px">management and</div>
<div class="t" style="left:336.60px;top:511.92px;font-size:12.5px;color:#000;letter-spacing:0.211px">entrepreneurship; Supervision</div>
<div class="t" style="left:1061.60px;top:473.92px;font-size:12.5px;color:#000;letter-spacing:0.320px">Effective communication with</div>
<div class="t" style="left:1061.60px;top:492.92px;font-size:12.5px;color:#000;letter-spacing:0.140px">groups; Theory and practice in</div>
<div class="t" style="left:1061.60px;top:511.92px;font-size:12.5px;color:#000;letter-spacing:0.090px">research; Survival in labor</div>
<div class="t" style="left:1061.60px;top:530.92px;font-size:12.5px;color:#000;letter-spacing:0.431px">market</div>
<div class="t" style="left:35.60px;top:635.12px;font-size:12.5px;color:#000;letter-spacing:0.176px">Modules specific</div>
<div class="t" style="left:1061.60px;top:549.92px;font-size:12.5px;color:#000;letter-spacing:0.055px">Systems modeling and</div>
<div class="t" style="left:1061.60px;top:568.92px;font-size:12.5px;color:#000;letter-spacing:0.246px">simulation; Navigation in</div>
<div class="t" style="left:1061.60px;top:587.92px;font-size:12.5px;color:#000;letter-spacing:0.090px">transport systeems; Sensoric</div>
<div class="t" style="left:1061.60px;top:606.92px;font-size:12.5px;color:#000;letter-spacing:0.154px">in research; Powel electronic</div>
<div class="t" style="left:1061.60px;top:625.92px;font-size:12.5px;color:#000;letter-spacing:0.208px">&amp; systems; Envirinmental math</div>
<div class="t" style="left:1061.60px;top:644.92px;font-size:12.5px;color:#000;letter-spacing:0.183px">modeling; Satellit image</div>
<div class="t" style="left:1061.60px;top:663.92px;font-size:12.5px;color:#000;letter-spacing:0.100px">process techniques; Robotic</div>
<div class="t" style="left:1061.60px;top:682.92px;font-size:12.5px;color:#000;letter-spacing:0.073px">systeems; Materials science</div>
<div class="t" style="left:1061.60px;top:701.92px;font-size:12.5px;color:#000;letter-spacing:0.159px">and solidification processing</div>
<div class="t" style="left:35.60px;top:777.12px;font-size:12.5px;color:#000;letter-spacing:0.083px">Reports</div>
<div class="t" style="left:155.60px;top:738.92px;font-size:12.5px;color:#000;letter-spacing:0.145px">Doctoral education in EU;</div>
<div class="t" style="left:155.60px;top:757.92px;font-size:12.5px;color:#000;letter-spacing:0.089px">Doctoral education in BY, RU</div>
<div class="t" style="left:155.60px;top:776.92px;font-size:12.5px;color:#000;letter-spacing:0.377px">and AM</div>
<div class="t" style="left:336.60px;top:738.92px;font-size:12.5px;color:#000;letter-spacing:0.164px">Report on career tracking</div>
<div class="t" style="left:517.60px;top:738.92px;font-size:12.5px;color:#000;letter-spacing:0.225px">Competence profiles for</div>
<div class="t" style="left:517.60px;top:757.92px;font-size:12.5px;color:#000;letter-spacing:0.129px">applied research</div>
<div class="t" style="left:699.60px;top:738.92px;font-size:12.5px;color:#000;letter-spacing:0.272px">Online Institutional Handbook</div>
<div class="t" style="left:699.60px;top:757.92px;font-size:12.5px;color:#000;letter-spacing:0.220px">for Doctoral Education;</div>
<div class="t" style="left:699.60px;top:776.92px;font-size:12.5px;color:#000;letter-spacing:0.103px">Training packages on doctoral</div>
<div class="t" style="left:699.60px;top:795.92px;font-size:12.5px;color:#000;transform:scaleX(0.9905);transform-origin:0 0">education in PT, LT, FR, IT</div>
<div class="t" style="left:1244.60px;top:738.92px;font-size:12.5px;color:#000;letter-spacing:0.240px">PhD Internationalization</div>
<div class="t" style="left:35.60px;top:833.92px;font-size:12.5px;color:#000;letter-spacing:0.219px">Tools</div>
<div class="t" style="left:336.60px;top:833.92px;font-size:12.5px;color:#000;letter-spacing:0.134px">Graduate tracking survey</div>
<div class="r" style="left:1505px;top:223px;width:17px;height:626px;background:#e6e6e6;"></div>
<div class="r" style="left:1508px;top:225px;width:12px;height:12px;background:#fff;border:1px solid #c6c6c6;box-sizing:border-box;"></div>
<svg class="r" style="left:1510px;top:228px;" width="8" height="5" viewBox="0 0 8 5"><path d="M.5 4.5 H7.5 L4 1Z" fill="#666"/></svg>
<div class="r" style="left:1508px;top:237px;width:12px;height:603px;background:#dcdcdc;"></div>
<div class="r" style="left:1508px;top:237px;width:12px;height:331px;background:#fff;border:1px solid #c6c6c6;box-sizing:border-box;"></div>
<div class="r" style="left:1508px;top:840px;width:12px;height:11px;background:#fff;border:1px solid #c6c6c6;box-sizing:border-box;"></div>
<svg class="r" style="left:1510px;top:843px;" width="8" height="5" viewBox="0 0 8 5"><path d="M.5 .5 H7.5 L4 4Z" fill="#666"/></svg>
<svg class="r" style="left:1499px;top:540px;" width="12" height="18" viewBox="0 0 12 18"><path d="M1 1 V14 L4 11 L6.5 16.5 L8.5 15.5 L6 10 H10Z" fill="#fff" stroke="#222" stroke-width="1"/></svg>
<div class="r" style="left:1543px;top:163px;width:368px;height:207px;background:#dfe4e8;overflow:hidden">
<div class="r" style="left:139px;top:0px;width:229px;height:207px;background:linear-gradient(90deg,#e2e6e9,#dfe4e8 60%,#d9dee2);border-radius:0;"></div>
<div class="r" style="left:0px;top:0px;width:10px;height:207px;background:#4a2e12;border-radius:0;"></div>
<div class="r" style="left:10px;top:0px;width:22px;height:207px;background:linear-gradient(90deg,#9c7a48,#a8865a);border-radius:0;"></div>
<div class="r" style="left:32px;top:0px;width:20px;height:207px;background:#9a7e56;border-radius:0;"></div>
<div class="r" style="left:34px;top:0px;width:16px;height:207px;background:#76664e;border-radius:0;filter:blur(0.5px);"></div>
<div class="r" style="left:52px;top:0px;width:32px;height:207px;background:#7c6c52;border-radius:0;"></div>
<div class="r" style="left:84px;top:0px;width:22px;height:207px;background:#9a7e56;border-radius:0;"></div>
<div class="r" style="left:86px;top:0px;width:18px;height:207px;background:#76664e;border-radius:0;filter:blur(0.5px);"></div>
<div class="r" style="left:106px;top:0px;width:17px;height:207px;background:#a8865a;border-radius:0;"></div>
<div class="r" style="left:123px;top:0px;width:16px;height:207px;background:linear-gradient(90deg,#b8956a,#a88a60);border-radius:0;"></div>
<div class="r" style="left:33px;top:20px;width:19px;height:3px;background:#a88a5a;border-radius:0;filter:blur(0.5px);"></div>
<div class="r" style="left:33px;top:93px;width:19px;height:3px;background:#a88a5a;border-radius:0;filter:blur(0.5px);"></div>
<div class="r" style="left:33px;top:164px;width:19px;height:3px;background:#a88a5a;border-radius:0;filter:blur(0.5px);"></div>
<div class="r" style="left:85px;top:19px;width:21px;height:3px;background:#a88a5a;border-radius:0;filter:blur(0.5px);"></div>
<div class="r" style="left:85px;top:93px;width:21px;height:3px;background:#a88a5a;border-radius:0;filter:blur(0.5px);"></div>
<div class="r" style="left:54px;top:110px;width:95px;height:100px;background:#1a2a16;border-radius:50% 50% 10% 10%;filter:blur(3px);"></div>
<div class="r" style="left:54px;top:135px;width:30px;height:50px;background:#3a5a38;border-radius:50%;filter:blur(4px);"></div>
<div class="r" style="left:163px;top:50px;width:52px;height:88px;background:#1e301c;border-radius:40% 60% 30% 40%;filter:blur(3px);"></div>
<div class="r" style="left:160px;top:100px;width:35px;height:36px;background:#3a5234;border-radius:50%;filter:blur(4px);"></div>
<div class="r" style="left:300px;top:100px;width:75px;height:110px;background:#18261a;border-radius:40% 0 0 30%;filter:blur(3.5px);"></div>
<div class="r" style="left:352px;top:65px;width:16px;height:60px;background:#1e3020;border-radius:50% 0 0 50%;filter:blur(3px);"></div>
<div class="r" style="left:136px;top:136px;width:214px;height:80px;background:#5e6268;border-radius:40px 40px 0 0;filter:blur(2px);"></div>
<div class="r" style="left:193px;top:56px;width:108px;height:90px;background:#3a3028;border-radius:50% 50% 30% 30%;filter:blur(2px);"></div>
<div class="r" style="left:182px;top:125px;width:12px;height:34px;background:#caa08a;border-radius:50%;filter:blur(2px);"></div>
<div class="r" style="left:288px;top:128px;width:12px;height:34px;background:#caa08a;border-radius:50%;filter:blur(2px);"></div>
<div class="r" style="left:192px;top:90px;width:104px;height:130px;background:#d8bba6;border-radius:40% 40% 40% 40%;filter:blur(2.5px);"></div>
<div class="r" style="left:205px;top:92px;width:55px;height:28px;background:#e8d2c2;border-radius:50%;filter:blur(5px);"></div>
<div class="r" style="left:205px;top:141px;width:30px;height:5px;background:#3e2c26;border-radius:50%;filter:blur(1.2px);"></div>
<div class="r" style="left:250px;top:143px;width:32px;height:5px;background:#3e2c26;border-radius:50%;filter:blur(1.2px);"></div>
<div class="r" style="left:210px;top:153px;width:22px;height:5px;background:#5a4036;border-radius:50%;filter:blur(1.5px);"></div>
<div class="r" style="left:253px;top:155px;width:24px;height:5px;background:#5a4036;border-radius:50%;filter:blur(1.5px);"></div>
<div class="r" style="left:236px;top:170px;width:18px;height:22px;background:#c49a86;border-radius:40%;filter:blur(3px);"></div>
<div class="r" style="left:228px;top:199px;width:42px;height:10px;background:#a87866;border-radius:50%;filter:blur(3px);"></div>
</div>
<div class="r" style="left:1544px;top:350px;width:98px;height:20px;background:rgba(35,35,35,.78)"></div>
<div class="t" style="left:1547.00px;top:355.09px;font-size:12.3px;color:#fff;letter-spacing:0.250px">Artem Bezrukov</div>
<div class="r" style="left:1543px;top:376px;width:368px;height:207px;background:linear-gradient(90deg,#dcdbe0,#dedcdf 45%,#dbd7d0 75%,#d6d1c8);overflow:hidden">
<div class="r" style="left:0px;top:0px;width:368px;height:60px;background:linear-gradient(#e4e2e5,rgba(228,226,229,0));border-radius:0;"></div>
<div class="r" style="left:20px;top:130px;width:80px;height:60px;background:#d2d0d4;border-radius:50%;filter:blur(10px);"></div>
<div class="r" style="left:0px;top:125px;width:5px;height:63px;background:linear-gradient(#3a5aa8,#d08a30);border-radius:0;filter:blur(0.8px);"></div>
<div class="r" style="left:121px;top:57px;width:80px;height:160px;background:#1c1e24;border-radius:22px 22px 4px 4px;filter:blur(1.2px);"></div>
<div class="r" style="left:150px;top:60px;width:4px;height:70px;background:#30343c;border-radius:0;filter:blur(2px);"></div>
<div class="r" style="left:125px;top:125px;width:30px;height:85px;background:#24262c;border-radius:6px;filter:blur(1.5px);"></div>
<div class="r" style="left:350px;top:50px;width:18px;height:80px;background:#e4e2e0;border-radius:0;filter:blur(3px);"></div>
<div class="r" style="left:360px;top:52px;width:8px;height:22px;background:#7a3020;border-radius:40%;filter:blur(2px);"></div>
<div class="r" style="left:362px;top:84px;width:6px;height:7px;background:#d83020;border-radius:50%;filter:blur(1.5px);"></div>
<div class="r" style="left:346px;top:132px;width:22px;height:75px;background:#4a2a1c;border-radius:3px;filter:blur(1px);"></div>
<div class="r" style="left:188px;top:19px;width:126px;height:150px;background:#1e1a1c;border-radius:50% 50% 25% 25% / 35% 35% 20% 20%;filter:blur(2px);"></div>
<div class="r" style="left:184px;top:90px;width:30px;height:90px;background:#1e1a1c;border-radius:30%;filter:blur(3px);"></div>
<div class="r" style="left:290px;top:80px;width:28px;height:90px;background:#221c1e;border-radius:30%;filter:blur(3px);"></div>
<div class="r" style="left:184px;top:132px;width:142px;height:90px;background:#171b2c;border-radius:30px 40px 0 0;filter:blur(1.5px);"></div>
<div class="r" style="left:150px;top:150px;width:50px;height:60px;background:#171b2c;border-radius:40% 0 0 0;filter:blur(1.5px);"></div>
<div class="r" style="left:210px;top:40px;width:78px;height:110px;background:#d9b5a8;border-radius:45% 45% 48% 48%;filter:blur(1.8px);"></div>
<div class="r" style="left:220px;top:50px;width:55px;height:25px;background:#e2c4ba;border-radius:50%;filter:blur(5px);"></div>
<div class="r" style="left:218px;top:71px;width:24px;height:4px;background:#4a3430;border-radius:50%;filter:blur(1px);"></div>
<div class="r" style="left:257px;top:68px;width:24px;height:4px;background:#4a3430;border-radius:50%;filter:blur(1px);"></div>
<div class="r" style="left:223px;top:84px;width:18px;height:5px;background:#3a2a2a;border-radius:50%;filter:blur(1.2px);"></div>
<div class="r" style="left:262px;top:81px;width:18px;height:5px;background:#3a2a2a;border-radius:50%;filter:blur(1.2px);"></div>
<div class="r" style="left:246px;top:96px;width:14px;height:16px;background:#c89c90;border-radius:40%;filter:blur(3px);"></div>
<div class="r" style="left:239px;top:120px;width:28px;height:7px;background:#c08a84;border-radius:50%;filter:blur(1.8px);"></div>
</div>
<div class="r" style="left:1544px;top:563px;width:156px;height:20px;background:rgba(35,35,35,.78)"></div>
<svg class="r" style="left:1548px;top:566px;" width="12" height="14" viewBox="0 0 12 14"><path d="M6 1 Q9 1 9 4 V8 Q9 10 6 10 Q3 10 3 8 V4 Q3 1 6 1Z" fill="#e5484d"/><path d="M6 10.5 V13 M3 13 H9" stroke="#e5484d" stroke-width="1"/><path d="M1 13 L11 2" stroke="#e5484d" stroke-width="1.3"/></svg>
<div class="t" style="left:1565.00px;top:568.59px;font-size:12.3px;color:#fff;letter-spacing:0.328px">Marianna Harutyunyan</div>
<div class="r" style="left:1539px;top:585px;width:376px;height:215px;background:linear-gradient(180deg,#cde36a,#bde054 40%,#e8f478 80%,#f6f98c)"></div>
<div class="r" style="left:1543px;top:589px;width:368px;height:207px;background:#d6d3d2;overflow:hidden">
<div class="r" style="left:0px;top:0px;width:64px;height:100px;background:#f4f5f1;border-radius:0;"></div>
<div class="r" style="left:62px;top:35px;width:80px;height:110px;background:linear-gradient(90deg,#cfd0d4,#dcdcdf);border-radius:0;filter:blur(1.5px);"></div>
<div class="r" style="left:140px;top:39px;width:100px;height:50px;background:#d3cfcb;border-radius:0;filter:blur(1px);"></div>
<div class="r" style="left:66px;top:0px;width:172px;height:40px;background:#9c5a34;border-radius:0;"></div>
<div class="r" style="left:66px;top:35px;width:172px;height:5px;background:#c47a45;border-radius:0;"></div>
<div class="r" style="left:78px;top:12px;width:18px;height:22px;background:#c33a30;border-radius:40%;filter:blur(1.5px);"></div>
<div class="r" style="left:80px;top:24px;width:16px;height:10px;background:#e0e0e0;border-radius:40%;filter:blur(1.5px);"></div>
<div class="r" style="left:99px;top:24px;width:12px;height:11px;background:#f0eeee;border-radius:0;filter:blur(1px);"></div>
<div class="r" style="left:112px;top:22px;width:10px;height:13px;background:#2a2a2a;border-radius:0;filter:blur(1px);"></div>
<div class="r" style="left:123px;top:24px;width:20px;height:11px;background:#d02a20;border-radius:0;filter:blur(1px);"></div>
<div class="r" style="left:145px;top:18px;width:8px;height:17px;background:#222;border-radius:0;filter:blur(1px);"></div>
<div class="r" style="left:155px;top:14px;width:14px;height:22px;background:#2a6a50;border-radius:0;filter:blur(1px);"></div>
<div class="r" style="left:168px;top:16px;width:12px;height:20px;background:#e0d050;border-radius:0;filter:blur(1px);"></div>
<div class="r" style="left:181px;top:8px;width:10px;height:28px;background:#40a0d8;border-radius:0;filter:blur(1px);"></div>
<div class="r" style="left:192px;top:4px;width:45px;height:32px;background:#8a8078;border-radius:0;filter:blur(2.5px);"></div>
<div class="r" style="left:237px;top:0px;width:131px;height:207px;background:#b5602a;border-radius:0;"></div>
<div class="r" style="left:242px;top:0px;width:125px;height:23px;background:repeating-linear-gradient(90deg,#3a3436 0 6px,#cfc8c0 6px 10px,#2a2a30 10px 15px,#e8e2d8 15px 19px,#6a6070 19px 23px);border-radius:0;filter:blur(0.8px);"></div>
<div class="r" style="left:242px;top:33px;width:56px;height:44px;background:repeating-linear-gradient(90deg,#e6e4e0 0 7px,#c8c2bc 7px 10px,#f2f0ec 10px 16px,#9a7a5a 16px 20px);border-radius:0;filter:blur(0.8px);"></div>
<div class="r" style="left:298px;top:33px;width:31px;height:44px;background:repeating-linear-gradient(90deg,#1e3a80 0 5px,#e8e6e8 5px 8px,#7a4a90 8px 12px,#2a50a0 12px 16px);border-radius:0;filter:blur(0.8px);"></div>
<div class="r" style="left:336px;top:30px;width:31px;height:47px;background:repeating-linear-gradient(90deg,#f0eeea 0 6px,#3a70c8 6px 11px,#dcdad6 11px 15px);border-radius:0;filter:blur(0.8px);"></div>
<div class="r" style="left:242px;top:88px;width:50px;height:46px;background:repeating-linear-gradient(180deg,#e8e2d0 0 4px,#7aa0a0 4px 5px,#d8ceb4 5px 9px,#4a4038 9px 10px);border-radius:0;filter:blur(1px);"></div>
<div class="r" style="left:291px;top:88px;width:36px;height:46px;background:repeating-linear-gradient(180deg,#ddd6c6 0 3px,#8a8070 3px 4px);border-radius:0;filter:blur(1px);"></div>
<div class="r" style="left:331px;top:90px;width:36px;height:44px;background:repeating-linear-gradient(90deg,#d84a22 0 9px,#2a5ec0 9px 14px,#3a3a40 14px 19px,#e06a30 19px 26px);border-radius:0;filter:blur(1px);"></div>
<div class="r" style="left:267px;top:142px;width:71px;height:52px;background:#c46a2e;border-radius:0;filter:blur(0.5px);"></div>
<div class="r" style="left:338px;top:144px;width:29px;height:40px;background:repeating-linear-gradient(180deg,#e8e4dc 0 3px,#8a8a8a 3px 4px);border-radius:0;filter:blur(1px);"></div>
<div class="r" style="left:300px;top:193px;width:68px;height:14px;background:#e0883a;border-radius:0;filter:blur(0.8px);"></div>
<div class="r" style="left:0px;top:95px;width:58px;height:30px;background:#2a8ad8;border-radius:0;filter:blur(1.2px);"></div>
<div class="r" style="left:42px;top:96px;width:16px;height:22px;background:#e8e8e8;border-radius:0;filter:blur(1px);"></div>
<div class="r" style="left:0px;top:118px;width:62px;height:15px;background:#34465a;border-radius:0;filter:blur(1.2px);"></div>
<div class="r" style="left:0px;top:133px;width:64px;height:74px;background:#e2e0de;border-radius:0;filter:blur(1px);"></div>
<div class="r" style="left:62px;top:131px;width:25px;height:40px;background:#c8702e;border-radius:0;filter:blur(1px);"></div>
<div class="r" style="left:100px;top:55px;width:37px;height:56px;background:#222428;border-radius:6px;filter:blur(1.2px);"></div>
<div class="r" style="left:86px;top:116px;width:56px;height:32px;background:#25282c;border-radius:5px;filter:blur(1.5px);"></div>
<div class="r" style="left:134px;top:36px;width:94px;height:128px;background:#cfa08c;border-radius:48% 48% 42% 42%;filter:blur(2px);"></div>
<div class="r" style="left:150px;top:40px;width:60px;height:30px;background:#dcc0b0;border-radius:50%;filter:blur(5px);"></div>
<div class="r" style="left:132px;top:50px;width:14px;height:45px;background:#5a4038;border-radius:50%;filter:blur(2.5px);"></div>
<div class="r" style="left:131px;top:92px;width:13px;height:34px;background:#c89686;border-radius:50%;filter:blur(2px);"></div>
<svg class="r" style="left:0;top:0;filter:blur(0.7px)" width="368" height="207" viewBox="0 0 368 207"><rect x="141" y="80" width="40" height="26" rx="6" fill="#b09cb0" stroke="#2c2a38" stroke-width="4"/><rect x="187" y="79" width="40" height="26" rx="6" fill="#b4a4bc" stroke="#2c2a38" stroke-width="4"/><path d="M181 88 Q184 85 187 88" stroke="#2a2836" stroke-width="3" fill="none"/><path d="M130 84 L141 86" stroke="#2a2836" stroke-width="3"/></svg>
<div class="r" style="left:174px;top:116px;width:44px;height:14px;background:#d4d0cc;border-radius:50% 50% 40% 40%;filter:blur(1.8px);"></div>
<div class="r" style="left:182px;top:131px;width:30px;height:6px;background:#8a6258;border-radius:50%;filter:blur(1.5px);"></div>
<svg class="r" style="left:0;top:0;filter:blur(1.2px)" width="368" height="207" viewBox="0 0 368 207"><path d="M42 207 L66 158 Q90 140 118 133 L150 150 L212 154 L222 146 Q255 150 283 158 Q300 175 312 207Z" fill="#1d212c"/><path d="M150 156 L212 158 L206 207 L162 207Z" fill="#a8c8ec"/><path d="M120 128 L150 134 L166 207 L128 207Z" fill="#30343e"/><path d="M212 144 L240 148 L238 207 L204 207Z" fill="#2c3038"/></svg>
</div>
<div class="r" style="left:1544px;top:777px;width:44px;height:19px;background:rgba(35,35,35,.78)"></div>
<div class="t" style="left:1547.00px;top:781.59px;font-size:12.3px;color:#fff;letter-spacing:0.365px">Marek</div>
</body></html>
